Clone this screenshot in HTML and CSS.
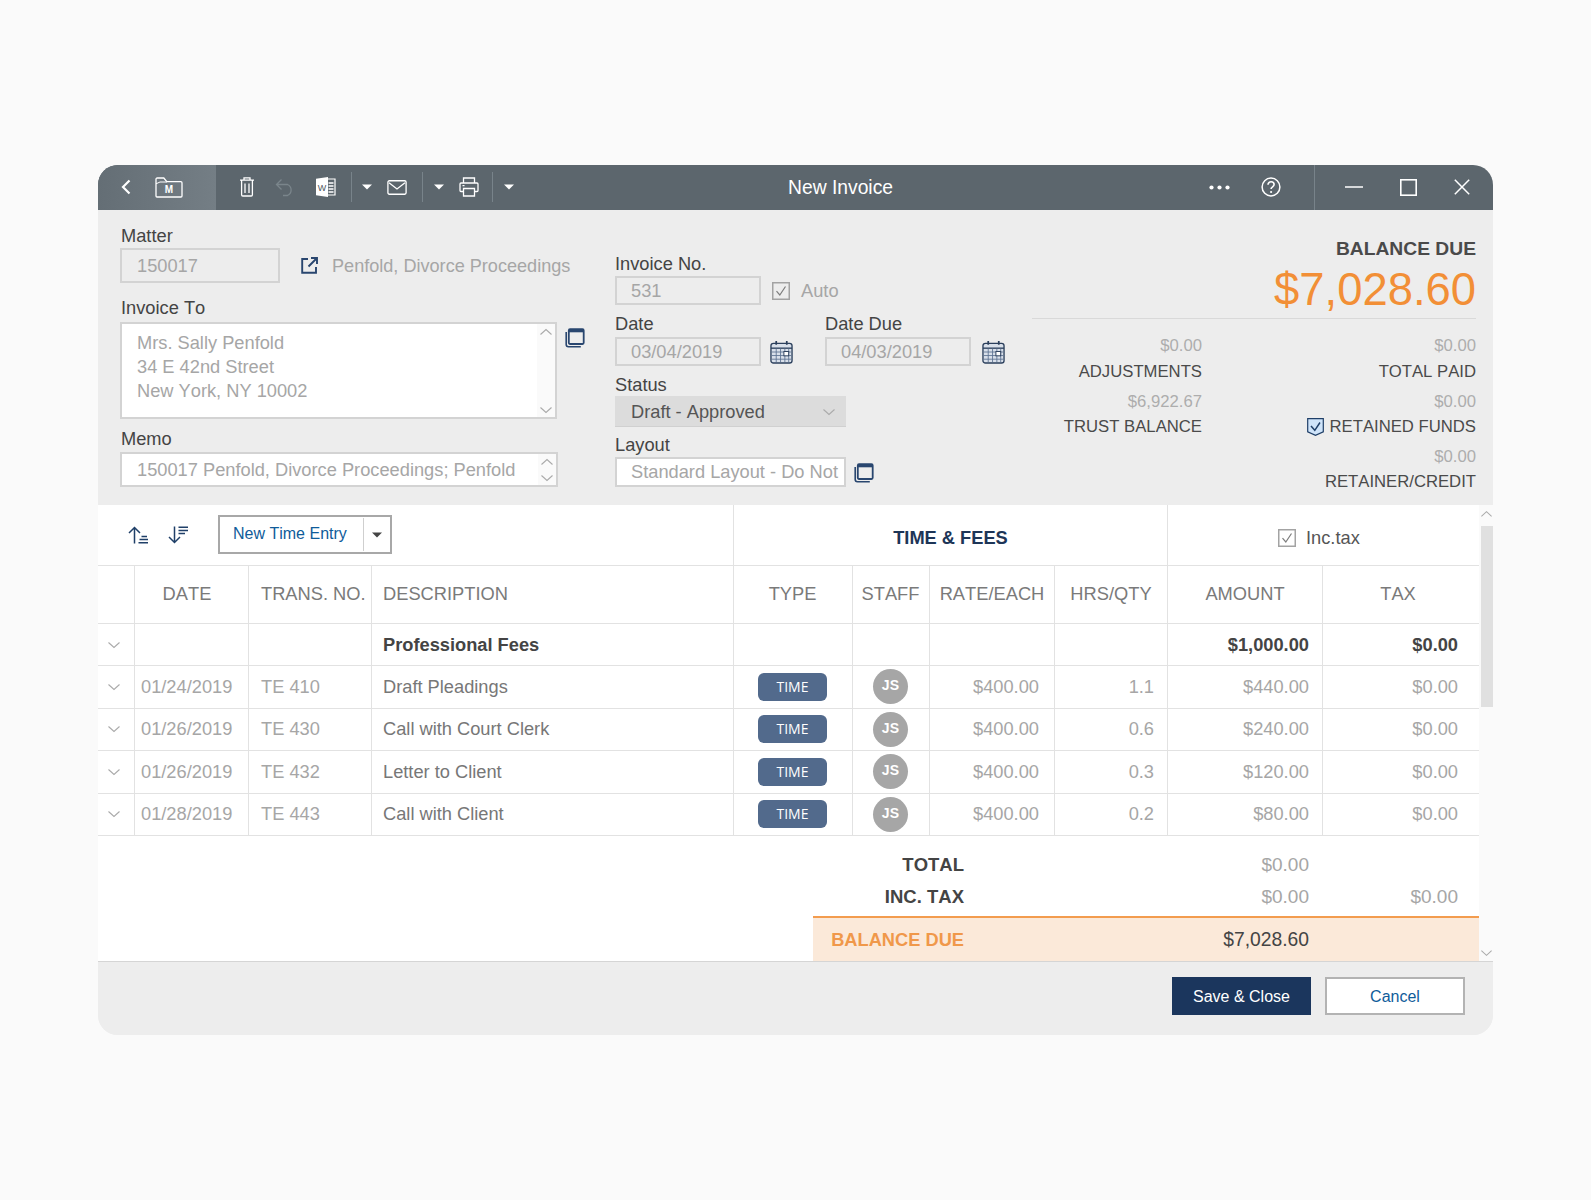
FILE: index.html
```html
<!DOCTYPE html>
<html lang="en">
<head>
<meta charset="utf-8">
<title>New Invoice</title>
<link rel="stylesheet" href="styles.css">
</head>
<body>
<svg class="defs" width="0" height="0" aria-hidden="true">
  <symbol id="chev-d" viewBox="0 0 14 8"><path d="M1.5 1.5 7 6.5l5.5-5" fill="none" stroke="currentColor" stroke-width="1.1"/></symbol>
  <symbol id="chev-u" viewBox="0 0 14 8"><path d="M1.5 6.5 7 1.5l5.5 5" fill="none" stroke="currentColor" stroke-width="1.1"/></symbol>
  <symbol id="caret" viewBox="0 0 10 6"><path d="M0 .5h10L5 5.5z" fill="currentColor"/></symbol>
  <symbol id="copy" viewBox="0 0 20 21"><path d="M5 2.2h12.5c.7 0 1.2.5 1.2 1.2v12.4c0 .7-.5 1.2-1.2 1.2H5c-.7 0-1.2-.5-1.2-1.2V3.4c0-.7.5-1.2 1.2-1.2z" fill="none" stroke="#29466f" stroke-width="1.8"/><path d="M4 4h14.5" stroke="#29466f" stroke-width="2.6"/><path d="M1.2 5v12.6c0 1.2.9 2.2 2.2 2.2h12.4" fill="none" stroke="#29466f" stroke-width="1.6"/></symbol>
  <symbol id="cal" viewBox="0 0 24 25"><rect x="1" y="3.5" width="22" height="20.5" rx="2.5" fill="#d9e0ea" stroke="#2b3f5c" stroke-width="1.4"/><path d="M1 8.5h22" stroke="#2b3f5c" stroke-width="1.4"/><path d="M2 12.5h20M2 16.2h20M2 20h20M6.5 9v14M11 9v14M15.5 9v14M19.5 9v14" stroke="#5d7392" stroke-width=".9"/><rect x="14.5" y="12" width="5" height="4.5" fill="#fff" stroke="#2b3f5c"/><path d="M6.5 1v4M17.5 1v4" stroke="#2b3f5c" stroke-width="1.8"/></symbol>
  <symbol id="check" viewBox="0 0 18 18"><rect x=".75" y=".75" width="16.5" height="16.5" fill="none" stroke="#a3a3a3" stroke-width="1.5"/><path d="M4.5 9.2 7.8 13 13.5 4.5" fill="none" stroke="#7d7d7d" stroke-width="1.2"/></symbol>
</svg>

<main class="window">
  <header class="titlebar">
    <div class="title-nav">
      <svg class="ic-back" viewBox="0 0 12 18"><path d="M9.5 2.5 3 9l6.5 6.5" fill="none" stroke="#fff" stroke-width="2.2"/></svg>
      <svg class="ic-folder" viewBox="0 0 28 21"><path d="M1 19V2.2C1 1.5 1.5 1 2.2 1h6.600l3 3.600h14c.7 0 1.200.5 1.200 1.200V19c0 .6-.5 1-1 1H2c-.5 0-1-.4-1-1z" fill="none" stroke="#fff" stroke-width="1.3"/><path d="M1 6.8 5 5h7" fill="none" stroke="#fff" stroke-width="1"/><text x="14" y="16.3" class="folder-m">M</text></svg>
    </div>
    <div class="title-tools">
      <svg class="ic-trash" viewBox="0 0 16 21"><path d="M1 4.2h14M5 4V1.8h6V4M2.6 4.5v14.3c0 .7.5 1.2 1.2 1.2h8.400c.7 0 1.200-.5 1.200-1.200V4.500M6 7.500v9.500M10 7.500v9.500" fill="none" stroke="#fff" stroke-width="1.3"/></svg>
      <svg class="ic-undo" viewBox="0 0 20 19"><path d="M6.5 1.5 1.5 6.5l5 5M2 6.5h10.500a6 6 0 0 1 0 11H8" fill="none" stroke="#7a858b" stroke-width="1.3"/></svg>
      <svg class="ic-word" viewBox="0 0 20 20"><path d="M11 2h8v16h-8z" fill="none" stroke="#fff" stroke-width="1.2"/><path d="M12.5 6h5M12.5 9h5M12.5 12h5M12.5 15h5" stroke="#fff" stroke-width="1.3"/><path d="M0 1.8 12 0v20L0 18.2z" fill="#fff"/><text x="6" y="13.5" class="word-w">W</text></svg>
      <span class="tool-sep"></span>
      <svg class="ic-caret caret-first"><use href="#caret"/></svg>
      <svg class="ic-mail" viewBox="0 0 21 16"><rect x=".8" y=".8" width="19.4" height="14.4" rx="1.5" fill="none" stroke="#fff" stroke-width="1.4"/><path d="m2 3 8.5 6.500L19 3" fill="none" stroke="#fff" stroke-width="1.4"/></svg>
      <span class="tool-sep"></span>
      <svg class="ic-caret"><use href="#caret"/></svg>
      <svg class="ic-print" viewBox="0 0 20 20"><path d="M4.5 6V1h11v5M4.5 14.500H2c-.6 0-1-.4-1-1V7c0-.6.4-1 1-1h16c.6 0 1 .4 1 1v6.500c0 .6-.4 1-1 1h-2.500" fill="none" stroke="#fff" stroke-width="1.3"/><path d="M4.5 11.5h11V19h-11z" fill="none" stroke="#fff" stroke-width="1.3"/><path d="M3.5 8.7h2" stroke="#fff" stroke-width="1.2"/></svg>
      <span class="tool-sep sep-print"></span>
      <svg class="ic-caret"><use href="#caret"/></svg>
    </div>
    <h1 class="title-text">New Invoice</h1>
    <div class="title-right">
      <svg class="ic-dots" viewBox="0 0 21 5"><circle cx="2.5" cy="2.5" r="2.1" fill="#fff"/><circle cx="10.5" cy="2.5" r="2.1" fill="#fff"/><circle cx="18.5" cy="2.5" r="2.1" fill="#fff"/></svg>
      <svg class="ic-help" viewBox="0 0 20 20"><circle cx="10" cy="10" r="8.9" fill="none" stroke="#fff" stroke-width="1.5"/><path d="M7 7.8c0-1.9 1.4-3 3.1-3 1.7 0 3 1.1 3 2.7 0 2.4-3 2.3-3 4.600" fill="none" stroke="#fff" stroke-width="1.6"/><circle cx="10.1" cy="15" r="1.1" fill="#fff"/></svg>
    </div>
    <div class="title-win">
      <svg class="ic-min" viewBox="0 0 18 2"><path d="M0 1h18" stroke="#fff" stroke-width="1.4"/></svg>
      <svg class="ic-max" viewBox="0 0 17 17"><rect x=".8" y=".8" width="15.4" height="15.4" fill="none" stroke="#fff" stroke-width="1.6"/></svg>
      <svg class="ic-close" viewBox="0 0 16 16"><path d="m.8.8 14.4 14.4M15.2.8.8 15.2" stroke="#fff" stroke-width="1.5"/></svg>
    </div>
  </header>

  <section class="form">
    <div class="col-left">
      <label class="lbl">Matter</label>
      <div class="matter-row">
        <div class="field field-matter">150017</div>
        <svg class="ic-link" viewBox="0 0 17 17"><path d="M7 2H1.2v13.800H15V10" fill="none" stroke="#29466f" stroke-width="1.9"/><path d="M10 1h6v6M16 1 7.5 9.5" fill="none" stroke="#29466f" stroke-width="1.9"/></svg>
        <span class="matter-name">Penfold, Divorce Proceedings</span>
      </div>
      <label class="lbl lbl-to">Invoice To</label>
      <div class="with-icon">
        <div class="box box-addr">
          <div class="box-text">Mrs. Sally Penfold<br>34 E 42nd Street<br>New York, NY 10002</div>
          <div class="box-strip">
            <svg class="chev"><use href="#chev-u"/></svg>
            <svg class="chev"><use href="#chev-d"/></svg>
          </div>
        </div>
        <svg class="ic-copy"><use href="#copy"/></svg>
      </div>
      <label class="lbl lbl-memo">Memo</label>
      <div class="box box-memo">
        <div class="box-text">150017 Penfold, Divorce Proceedings; Penfold</div>
        <div class="box-strip">
          <svg class="chev"><use href="#chev-u"/></svg>
          <svg class="chev"><use href="#chev-d"/></svg>
        </div>
      </div>
    </div>

    <div class="col-mid">
      <label class="lbl">Invoice No.</label>
      <div class="inline-row">
        <div class="field field-sm">531</div>
        <svg class="ic-check ic-check-auto"><use href="#check"/></svg>
        <span class="auto-text">Auto</span>
      </div>
      <div class="date-row">
        <div class="date-cell">
          <label class="lbl">Date</label>
          <div class="inline-row">
            <div class="field field-sm">03/04/2019</div>
            <svg class="ic-cal"><use href="#cal"/></svg>
          </div>
        </div>
        <div class="date-cell date-cell-due">
          <label class="lbl">Date Due</label>
          <div class="inline-row">
            <div class="field field-sm">04/03/2019</div>
            <svg class="ic-cal"><use href="#cal"/></svg>
          </div>
        </div>
      </div>
      <label class="lbl lbl-status">Status</label>
      <div class="select">Draft - Approved<svg class="chev"><use href="#chev-d"/></svg></div>
      <label class="lbl lbl-layout">Layout</label>
      <div class="inline-row">
        <div class="field field-layout">Standard Layout - Do Not</div>
        <svg class="ic-copy ic-copy-layout"><use href="#copy"/></svg>
      </div>
    </div>

    <div class="col-right">
      <div class="bal-label">BALANCE DUE</div>
      <div class="bal-amount">$7,028.60</div>
      <div class="stats">
        <div class="stat"><div class="val">$0.00</div><div class="cap">ADJUSTMENTS</div></div>
        <div class="stat"><div class="val">$0.00</div><div class="cap">TOTAL PAID</div></div>
        <div class="stat"><div class="val">$6,922.67</div><div class="cap">TRUST BALANCE</div></div>
        <div class="stat"><div class="val">$0.00</div><div class="cap"><svg class="ic-retained" viewBox="0 0 17 18"><path d="M.7.7h15.600v13.100l-7.800 3.500-7.800-3.500z" fill="#cfe4fa" stroke="#1f3f68" stroke-width="1.2"/><path d="M4 8l3.800 4.300L13 4.500" fill="none" stroke="#1f3f68" stroke-width="1.5"/></svg>RETAINED FUNDS</div></div>
        <div class="stat"></div>
        <div class="stat"><div class="val">$0.00</div><div class="cap">RETAINER/CREDIT</div></div>
      </div>
    </div>
  </section>

  <section class="content">
    <div class="table-area">
      <div class="toolbar">
        <div class="tb-left">
          <svg class="ic-sort" viewBox="0 0 21 18"><path d="M6.5 17.5V1.5M1 7l5.5-5.5L12 7" fill="none" stroke="#1f3f68" stroke-width="1.5"/><path d="M13.500 10.500H19M11.500 13.500H20M10.500 16.700H20" stroke="#1f3f68" stroke-width="1.4"/></svg>
          <svg class="ic-sort" viewBox="0 0 21 18"><path d="M6.5.5v16M1 11l5.5 5.5L12 11" fill="none" stroke="#1f3f68" stroke-width="1.5"/><path d="M10.500 1.300H20M10.500 4.500H20M10.500 7.500H17" stroke="#1f3f68" stroke-width="1.4"/></svg>
          <div class="split-btn">
            <span class="split-main">New Time Entry</span>
            <span class="split-caret"><svg class="ic-caret ic-caret-dark"><use href="#caret"/></svg></span>
          </div>
        </div>
        <div class="tb-mid">TIME &amp; FEES</div>
        <div class="tb-right"><svg class="ic-check"><use href="#check"/></svg><span>Inc.tax</span></div>
      </div>

      <div class="row head">
        <div class="c"></div>
        <div class="c ctr date-head">DATE</div>
        <div class="c pad">TRANS. NO.</div>
        <div class="c pad-desc">DESCRIPTION</div>
        <div class="c ctr">TYPE</div>
        <div class="c ctr">STAFF</div>
        <div class="c ctr">RATE/EACH</div>
        <div class="c ctr">HRS/QTY</div>
        <div class="c ctr">AMOUNT</div>
        <div class="c ctr tax-head">TAX</div>
      </div>

      <div class="row body group">
        <div class="c ctr chevc"><svg class="chev"><use href="#chev-d"/></svg></div>
        <div class="c"></div><div class="c"></div>
        <div class="c pad-desc">Professional Fees</div>
        <div class="c"></div><div class="c"></div><div class="c"></div><div class="c"></div>
        <div class="c r-amt">$1,000.00</div>
        <div class="c r-tax">$0.00</div>
      </div>

      <div class="row body">
        <div class="c ctr chevc"><svg class="chev"><use href="#chev-d"/></svg></div>
        <div class="c pad-date">01/24/2019</div>
        <div class="c pad">TE 410</div>
        <div class="c pad-desc desc">Draft Pleadings</div>
        <div class="c ctr"><span class="badge">TIME</span></div>
        <div class="c ctr"><span class="avatar">JS</span></div>
        <div class="c r-rate">$400.00</div>
        <div class="c r-hrs">1.1</div>
        <div class="c r-amt">$440.00</div>
        <div class="c r-tax">$0.00</div>
      </div>
      <div class="row body">
        <div class="c ctr chevc"><svg class="chev"><use href="#chev-d"/></svg></div>
        <div class="c pad-date">01/26/2019</div>
        <div class="c pad">TE 430</div>
        <div class="c pad-desc desc">Call with Court Clerk</div>
        <div class="c ctr"><span class="badge">TIME</span></div>
        <div class="c ctr"><span class="avatar">JS</span></div>
        <div class="c r-rate">$400.00</div>
        <div class="c r-hrs">0.6</div>
        <div class="c r-amt">$240.00</div>
        <div class="c r-tax">$0.00</div>
      </div>
      <div class="row body">
        <div class="c ctr chevc"><svg class="chev"><use href="#chev-d"/></svg></div>
        <div class="c pad-date">01/26/2019</div>
        <div class="c pad">TE 432</div>
        <div class="c pad-desc desc">Letter to Client</div>
        <div class="c ctr"><span class="badge">TIME</span></div>
        <div class="c ctr"><span class="avatar">JS</span></div>
        <div class="c r-rate">$400.00</div>
        <div class="c r-hrs">0.3</div>
        <div class="c r-amt">$120.00</div>
        <div class="c r-tax">$0.00</div>
      </div>
      <div class="row body">
        <div class="c ctr chevc"><svg class="chev"><use href="#chev-d"/></svg></div>
        <div class="c pad-date">01/28/2019</div>
        <div class="c pad">TE 443</div>
        <div class="c pad-desc desc">Call with Client</div>
        <div class="c ctr"><span class="badge">TIME</span></div>
        <div class="c ctr"><span class="avatar">JS</span></div>
        <div class="c r-rate">$400.00</div>
        <div class="c r-hrs">0.2</div>
        <div class="c r-amt">$80.00</div>
        <div class="c r-tax">$0.00</div>
      </div>

      <div class="totals">
        <div class="t-row"><span class="t-lbl">TOTAL</span><span class="t-val">$0.00</span><span></span></div>
        <div class="t-row"><span class="t-lbl">INC. TAX</span><span class="t-val">$0.00</span><span class="t-val">$0.00</span></div>
      </div>
      <div class="t-balance"><span class="t-bal-lbl">BALANCE DUE</span><span class="t-bal-val">$7,028.60</span></div>
    </div>
    <div class="scrollbar">
      <svg class="chev chev-sb-top"><use href="#chev-u"/></svg>
      <div class="thumb"></div>
      <svg class="chev chev-sb-bot"><use href="#chev-d"/></svg>
    </div>
  </section>

  <footer class="footer">
    <button class="btn btn-primary">Save &amp; Close</button>
    <button class="btn btn-ghost">Cancel</button>
  </footer>
</main>
</body>
</html>
```

FILE: styles.css
```css
* { box-sizing: border-box; }
html, body { margin: 0; padding: 0; }
body {
  background: #fafafa;
  font-family: "Liberation Sans", Arial, sans-serif;
  font-size: 18.25px;
  font-kerning: none;
  color: #444;
  height: 1200px;
  padding: 165px 98px 0;
}
.defs { display: block; height: 0; }
svg { display: block; flex: none; }

.window {
  width: 1395px;
  height: 870px;
  background: #ededed;
  border-radius: 20px;
  overflow: hidden;
  display: flex;
  flex-direction: column;
}

/* title bar */
.titlebar {
  height: 45px;
  background: #5c666d;
  display: flex;
  align-items: center;
  color: #fff;
  flex: none;
}
.title-nav {
  width: 118px;
  height: 45px;
  background: linear-gradient(90deg, #646e75, #747e85);
  display: flex;
  align-items: center;
  padding: 0 0 1px 22px;
}
.ic-back { width: 12px; height: 18px; }
.ic-folder { width: 28px; height: 21px; margin-left: 23px; }
.folder-m { font: bold 10px "Liberation Sans", sans-serif; fill: #fff; text-anchor: middle; }
.title-tools { display: flex; align-items: center; width: 310px; padding: 0 0 1px 23px; height: 45px; }
.ic-trash { width: 16px; height: 21px; margin-bottom: 2px; }
.ic-undo { width: 20px; height: 19px; margin-left: 20px; }
.ic-word { width: 20px; height: 20px; margin-left: 21px; }
.word-w { font: 9px "Liberation Sans", sans-serif; fill: #4c565c; text-anchor: middle; }
.tool-sep { width: 1px; height: 30px; background: #78838a; margin-left: 15px; }
.sep-print { margin-left: 13px; }
.ic-caret { width: 10px; height: 6px; color: #fff; margin-left: 11px; }
.caret-first { margin-left: 10px; }
.ic-mail { width: 20px; height: 15px; margin-left: 15px; }
.ic-print { width: 20px; height: 20px; margin-left: 15px; }
.title-text {
  margin: 0;
  width: 629px;
  flex: none;
  text-align: center;
  font-size: 19.3px;
  font-weight: 400;
  line-height: 45px;
}
.title-right { display: flex; align-items: center; width: 159px; flex: none; height: 45px; padding: 0 0 1px 54px; }
.ic-dots { width: 21px; height: 5px; }
.ic-help { width: 20px; height: 20px; margin-left: 31px; }
.title-win {
  flex: 1;
  height: 45px;
  display: flex;
  align-items: center;
  border-left: 1px solid #78838a;
  padding: 0 0 1px 30px;
}
.ic-min { width: 18px; height: 2px; }
.ic-max { width: 17px; height: 17px; margin-left: 37px; }
.ic-close { width: 16px; height: 16px; margin-left: 37px; }

/* form */
.form {
  height: 295px;
  flex: none;
  display: grid;
  grid-template-columns: 465px 390px 444px;
  column-gap: 30px;
  padding-left: 22px;
  background: #ededed;
}
.col-mid { padding-top: 42px; }
.col-left { padding-top: 14px; }
.col-left .lbl { padding-left: 1px; }
.col-right { padding-top: 27px; margin-left: -3px; width: 444px; }
.lbl { display: block; height: 24px; line-height: 24px; color: #444; }
.lbl-to { margin-top: 13px; height: 26px; }
.lbl-memo { margin-top: 8px; height: 25px; }
.lbl-status { margin-top: 6px; padding-top: 1px; }
.lbl-layout { margin-top: 6px; }

.field {
  border: 2px solid #d3d3d3;
  color: #a6a6a6;
  padding: 1px 0 0 14px;
  display: flex;
  align-items: center;
  white-space: nowrap;
  overflow: hidden;
}
.field-matter { width: 160px; height: 35px; padding-left: 15px; }
.matter-row { display: flex; align-items: center; }
.ic-link { width: 17px; height: 17px; margin-left: 21px; }
.matter-name { margin-left: 14px; color: #a6a6a6; padding-top: 1px; font-size: 18.1px; }
.field-sm { width: 146px; height: 29px; }
.field-layout { width: 231px; height: 30px; background: #fff; padding-top: 0; }
.inline-row { display: flex; align-items: center; }
.ic-check { width: 18px; height: 18px; }
.ic-check-auto { margin-left: 11px; }
.auto-text { margin-left: 11px; color: #a6a6a6; padding-top: 1px; }
.date-row { display: flex; margin-top: 7px; }
.date-cell { width: 210px; flex: none; }
.date-cell-due { width: 180px; }
.date-cell .lbl { height: 25px; }
.ic-cal { width: 23px; height: 24px; margin-left: 9px; }
.date-cell-due .ic-cal { margin-left: 11px; }
.select {
  width: 231px;
  height: 31px;
  background: #dcdcdc;
  border-bottom: 1px solid #d0d0d0;
  color: #555;
  padding: 1px 10px 0 16px;
  display: flex;
  align-items: center;
  justify-content: space-between;
}
.ic-copy { width: 20px; height: 21px; }
.ic-copy-layout { margin-left: 8px; }

.with-icon { display: flex; align-items: flex-start; }
.with-icon .ic-copy { margin-left: 8px; margin-top: 5px; }
.box {
  width: 438px;
  background: #fff;
  border: 2px solid #d3d3d3;
  display: flex;
  color: #a6a6a6;
}
.box-addr { height: 97px; }
.box-memo { height: 35px; }
.box-text { flex: 1; padding: 7px 0 0 15px; line-height: 24px; white-space: nowrap; }
.box-memo .box-text { padding-top: 3px; line-height: 26px; }
.box-strip {
  width: 18px;
  background: #fafafa;
  display: flex;
  flex-direction: column;
  justify-content: space-between;
  align-items: center;
  padding: 4px 0 3px;
}
.chev { width: 14px; height: 8px; color: #aaa; }

/* balance */
.bal-label { text-align: right; font-weight: 700; font-size: 19.25px; line-height: 24px; color: #4a4a4a; }
.bal-amount {
  text-align: right;
  font-size: 45.4px;
  line-height: 58px;
  color: #f28f36;
  height: 58px;
  border-bottom: 1px solid #d9d9d9;
}
.stats { display: grid; grid-template-columns: 170px 274px; margin-top: 14px; font-size: 16.7px; }
.stat { text-align: right; height: 56px; }
.stat:nth-child(n+3) { height: 54.5px; }
.val { color: #adadad; line-height: 25px; height: 26px; }
.stat:nth-child(n+3) .val { height: 25px; }
.cap { color: #4a4a4a; line-height: 25px; display: flex; justify-content: flex-end; align-items: center; gap: 6px; }
.ic-retained { width: 17px; height: 18px; }

/* table */
.content { display: flex; height: 456px; flex: none; background: #fff; }
.table-area { width: 1381px; background: #fff; flex: none; }
.toolbar {
  height: 61px;
  display: grid;
  grid-template-columns: 635px 435px 311px;
  border-bottom: 1px solid #e2e2e2;
}
.tb-left { display: flex; align-items: center; padding: 0 0 1px 30px; }
.ic-sort { width: 21px; height: 18px; margin: 1px 19px 0 0; }
.split-btn {
  margin-left: 10px;
  width: 174px;
  height: 39px;
  border: 2px solid #a8a8a8;
  display: flex;
  align-items: center;
  color: #0f5c9a;
  font-size: 16px;
}
.split-main { width: 144px; padding: 0 0 1px 13px; border-right: 1px solid #cfcfcf; line-height: 32px; }
.split-caret { flex: 1; display: flex; justify-content: center; }
.ic-caret-dark { color: #444; margin: 0; }
.tb-mid {
  border-left: 1px solid #e2e2e2;
  border-right: 1px solid #e2e2e2;
  display: flex; align-items: center; justify-content: center;
  font-weight: 700;
  color: #1d3557;
  padding-top: 6px;
}
.tb-right { display: flex; align-items: center; padding: 5px 0 0 110px; gap: 10px; color: #555; }

.row {
  display: grid;
  grid-template-columns: 37px 114px 123px 362px 119px 77px 125px 113px 155px 156px;
  border-bottom: 1px solid #e2e2e2;
}
.head { height: 58px; font-size: 18.3px; color: #7a7a7a; }
.head .c { padding-bottom: 2px; }
.body { height: 42.5px; color: #a6a6a6; }
.group { height: 42px; font-weight: 700; color: #444; }
.c { display: flex; align-items: center; border-right: 1px solid #e2e2e2; white-space: nowrap; min-width: 0; }
.c:last-child { border-right: 0; }
.c:nth-child(5), .c:nth-child(6) { padding-right: 1px; }
.ctr { justify-content: center; }
.date-head { padding-right: 9px; }
.head .tax-head { padding-right: 6px; }
.pad { padding-left: 12px; }
.pad-desc { padding-left: 11px; }
.pad-date { padding-left: 6px; }
.desc { color: #777; }
.chevc { padding-right: 4px; }
.r-rate { justify-content: flex-end; padding-right: 15px; }
.r-hrs { justify-content: flex-end; padding-right: 13px; }
.r-amt { justify-content: flex-end; padding-right: 13px; }
.r-tax { justify-content: flex-end; padding-right: 21px; }
.badge {
  width: 69px; height: 28px; border-radius: 6px;
  background: #526a8c; color: #fff;
  font: 14px/28px "Open Sans", sans-serif;
  text-align: center;
}
.avatar {
  width: 35px; height: 35px; border-radius: 50%;
  background: #a6a6a6; color: #fff;
  font: 700 14px/33px "Liberation Sans", sans-serif;
  letter-spacing: .3px;
  text-align: center;
}

.totals { height: 80px; padding-top: 13px; }
.t-row {
  display: grid;
  grid-template-columns: 866px 345px 149px;
  height: 32px;
  line-height: 32px;
}
.t-lbl { text-align: right; font-weight: 700; color: #444; font-size: 18.5px; }
.t-val { text-align: right; color: #a6a6a6; font-size: 19px; }
.t-balance {
  margin-left: 715px;
  height: 45px;
  border-top: 2px solid #f39c4e;
  background: #fbe9d9;
  display: grid;
  grid-template-columns: 151px 345px;
  line-height: 43px;
}
.t-bal-lbl { text-align: right; font-weight: 700; color: #f0984a; font-size: 18.25px; }
.t-bal-val { text-align: right; color: #444; font-size: 19.3px; }

.scrollbar {
  width: 14px;
  flex: none;
  background: #fafafa;
  display: flex;
  flex-direction: column;
  align-items: center;
}
.chev-sb-top { margin-top: 5px; margin-bottom: 8px; width: 13px; flex: none; }
.thumb { width: 12px; height: 181px; background: #e0e0e0; flex: none; align-self: flex-end; }
.chev-sb-bot { margin-top: auto; margin-bottom: 4px; width: 13px; }

/* footer */
.footer {
  height: 74px;
  flex: none;
  border-top: 1px solid #d5d5d5;
  background: #ededed;
  display: flex;
  justify-content: flex-end;
  gap: 14px;
  padding: 15px 28px 0 0;
}
.btn { height: 38px; font: 16px "Liberation Sans", sans-serif; border-radius: 0; padding: 1px 0 0; }
.btn-primary { width: 139px; background: #1b365d; color: #fff; border: 0; }
.btn-ghost { width: 140px; background: #fff; color: #0f5c9a; border: 2px solid #b3b3b3; }
```
